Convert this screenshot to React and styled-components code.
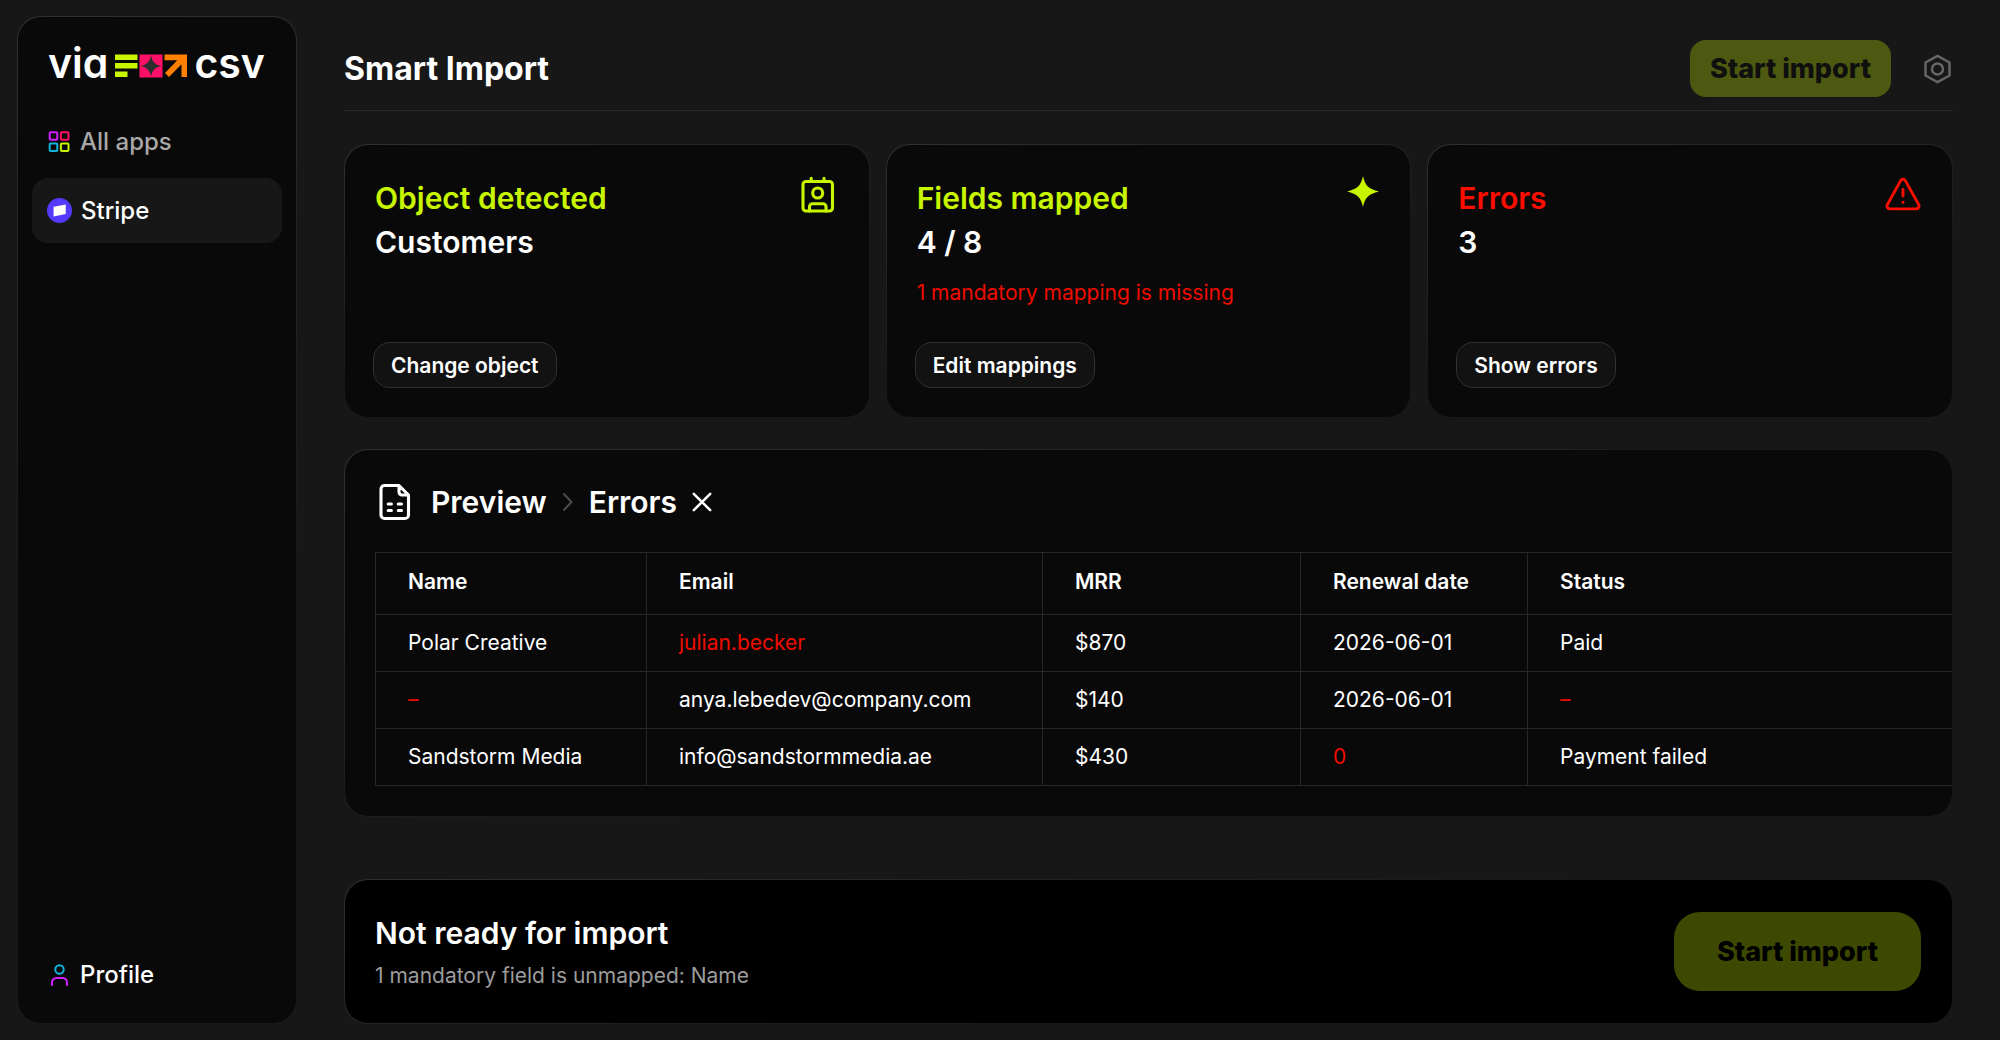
import { useState } from "react";
import styled, { createGlobalStyle } from "styled-components";

const GlobalStyle = createGlobalStyle`
    * {
        box-sizing: border-box;
    }

    body {
        margin: 0;
        background: #171717;
        color: #fff;
        font-family: Inter, "Liberation Sans", sans-serif;
    }

    h1, h2, p {
        margin: 0;
    }

    button {
        font-family: inherit;
        cursor: pointer;
    }
`;

const Page = styled.div`
    min-height: 100vh;
    display: grid;
    grid-template-columns: 280px minmax(0, 1fr);
    column-gap: 47px;
    padding: 16px 47px 16px 17px;
`;

const Surface = styled.section`
    border: 1px solid transparent;
    border-radius: 24px;
    background:
        linear-gradient(${(props) => props.$fill || "#090909"}, ${(props) => props.$fill || "#090909"}) padding-box,
        linear-gradient(165deg, #303030, #171717 60%) border-box;
`;

const Sidebar = styled(Surface)`
    display: flex;
    flex-direction: column;
    padding: 22px 14px 16px;
`;

const Logo = styled.a`
    display: flex;
    align-items: baseline;
    gap: 7px;
    padding: 0 16px;
    margin-bottom: 22px;
    color: #fff;
    font-size: 41px;
    line-height: 48px;
    font-weight: 600;
    font-feature-settings: "cv11";
    text-decoration: none;

    svg {
        margin-bottom: -2px;
    }
`;

const Nav = styled.nav`
    flex: 1;
    display: flex;
    flex-direction: column;
    gap: 4px;
`;

const NavLink = styled.a`
    display: flex;
    align-items: center;
    gap: 9px;
    height: 65px;
    padding: 0 15px;
    border-radius: 16px;
    background: ${(props) => (props.$active ? "#171717" : "transparent")};
    color: ${(props) => (props.$muted ? "#a8a8a8" : "#fff")};
    font-size: 24px;
    font-weight: 500;
    text-decoration: none;

    &:last-child {
        margin-top: auto;
    }
`;

const Main = styled.main`
    display: flex;
    flex-direction: column;
`;

const Header = styled.header`
    display: flex;
    align-items: center;
    height: 95px;
    padding: 24px 2px 13px 0;
    margin-bottom: 33px;
    border-bottom: 1px solid #2b2b2b;
`;

const Title = styled.h1`
    flex: 1;
    font-size: 32px;
    line-height: 40px;
    font-weight: 700;
`;

const StartButton = styled.button`
    height: ${(props) => (props.$large ? "79px" : "57px")};
    padding: 0 ${(props) => (props.$large ? "43px" : "20px")};
    border: 0;
    border-radius: ${(props) => (props.$large ? "26px" : "16px")};
    background: #cbf201;
    color: #000;
    font-size: 27px;
    font-weight: 800;
    opacity: 0.3;
`;

const IconButton = styled.button`
    display: flex;
    padding: 0;
    border: 0;
    background: none;
    color: inherit;
`;

const SettingsButton = styled(IconButton)`
    margin-left: 32px;
    color: #666;
`;

const Cards = styled.div`
    display: grid;
    grid-template-columns: repeat(3, minmax(0, 1fr));
    gap: 16px;
    margin-bottom: 31px;
`;

const Card = styled(Surface)`
    display: flex;
    flex-direction: column;
    align-items: flex-start;
    min-height: 274px;
    padding: 30px 31px 29px 28px;
`;

const CardHead = styled.div`
    align-self: stretch;
    display: flex;
    justify-content: space-between;
`;

const CardTitle = styled.h2`
    padding: 1px 0 0 2px;
    color: ${(props) => props.$color};
    font-size: 30px;
    line-height: 44px;
    font-weight: 600;
`;

const CardValue = styled.p`
    padding-left: 2px;
    font-size: 30px;
    line-height: 44px;
    font-weight: 600;
`;

const CardNote = styled.p`
    margin-top: 15px;
    padding-left: 2px;
    color: #f00c00;
    font-size: 21px;
    line-height: 28px;
`;

const CardButton = styled.button`
    margin-top: auto;
    height: 46px;
    padding: 0 17px;
    border: 1px solid #303030;
    border-radius: 17px;
    background: #121212;
    color: #fff;
    font-size: 21px;
    font-weight: 600;
`;

const Preview = styled(Surface)`
    padding: 32px 0 30px 30px;
    overflow: hidden;
`;

const Crumbs = styled.div`
    display: flex;
    align-items: center;
    height: 40px;
    margin-bottom: 30px;
`;

const Crumb = styled.h2`
    font-size: 30px;
    line-height: 40px;
    font-weight: 600;
    margin: 0 15px 0 16px;
`;

const Table = styled.table`
    width: 100%;
    table-layout: fixed;
    border-collapse: collapse;
    font-size: 21px;
    line-height: 28px;
    text-align: left;
`;

const Column = styled.col`
    width: ${(props) => props.$width};
`;

const HeadCell = styled.th`
    height: 62px;
    padding: 0 32px 4px;
    border: 1px solid #272727;
    border-right: 0;
    font-weight: 600;
`;

const Cell = styled.td`
    height: 57px;
    padding: 0 32px;
    border: 1px solid #272727;
    border-right: 0;
    color: ${(props) => (props.$invalid ? "#f00c00" : "#fff")};
`;

const Footer = styled(Surface)`
    display: flex;
    align-items: center;
    justify-content: space-between;
    height: 145px;
    margin-top: auto;
    padding: 0 31px 0 30px;
`;

const FooterTitle = styled.h2`
    font-size: 30px;
    line-height: 44px;
    font-weight: 600;
`;

const FooterNote = styled.p`
    margin-top: 5px;
    color: #9c9c9c;
    font-size: 21px;
    line-height: 32px;
`;

const LogoMark = () => (
    <svg width="72" height="24" viewBox="0 0 72 24" aria-hidden="true">
        <path fill="#c8f500" d="M0 .5h22.5V6H0zM0 9h22.5v5.500H0zM0 17.500h12.500V23H0z" />
        <path fill="#ff1068" d="M24.500.5h23v23h-23z" />
        <path fill="#2d2d2d" d="M36 1.500c1.500 6.500 4 9 10.500 10.500-6.500 1.500-9 4-10.500 10.500-1.500-6.500-4-9-10.500-10.500C32 10.500 34.500 8 36 1.500z" />
        <path fill="#ff8000" d="M49.500.5H72V23h-5.500V10.200L54 23l-4-4L62.300 6.200H49.500z" />
    </svg>
);

const AppsIcon = () => (
    <svg width="24" height="24" viewBox="0 0 24 24" fill="none" strokeWidth="2">
        <rect x="2.700" y="2.200" width="7.600" height="7.600" rx="1" stroke="#d320ff" />
        <rect x="13.900" y="2.200" width="7.600" height="7.600" rx="1" stroke="#ff1068" />
        <rect x="2.700" y="13.400" width="7.600" height="7.600" rx="1" stroke="#10b4dc" />
        <rect x="13.900" y="13.400" width="7.600" height="7.600" rx="1" stroke="#c8f500" />
    </svg>
);

const StripeIcon = () => (
    <svg width="25" height="25" viewBox="0 0 24 24">
        <circle cx="12" cy="12" r="12" fill="#533afd" />
        <path fill="#fff" d="M6.300 8.500 18 6.200v9.200L6.300 17.800z" />
    </svg>
);

const ProfileIcon = () => (
    <svg width="24" height="24" viewBox="0 0 24 24" fill="none" strokeWidth="2" strokeLinecap="round">
        <circle cx="12.500" cy="6.500" r="4.200" stroke="#10b4dc" />
        <path stroke="#d320ff" d="M5 22v-2.500a4.500 4.500 0 0 1 4.500-4.500h6a4.500 4.500 0 0 1 4.500 4.500V22" />
    </svg>
);

const SettingsIcon = () => (
    <svg width="28" height="32" viewBox="0 0 28 32" fill="none" stroke="currentColor" strokeWidth="2.500" strokeLinejoin="round">
        <path d="M14.500 2.800 26.500 9.500v13l-12 6.700L2.500 22.500v-13z" />
        <circle cx="14.500" cy="16" r="5.500" />
    </svg>
);

const ContactIcon = () => (
    <svg width="40" height="40" viewBox="0 0 40 40" fill="none" stroke="#c8f500" strokeWidth="3.100" strokeLinecap="round">
        <rect x="5" y="6.500" width="29.500" height="29.500" rx="3" />
        <path d="M13.200 3.200v3M26 3.200v3M11.500 36v-4.200a3 3 0 0 1 3-3h10.500a3 3 0 0 1 3 3V36" />
        <circle cx="19.700" cy="18" r="5" />
    </svg>
);

const SparkIcon = () => (
    <svg width="32" height="36" viewBox="2 0 32 36">
        <path fill="#c8f500" d="M18 1c2 9.500 5.500 13 16 15.500-10.500 2.500-14 6-16 15.500-2-9.500-5.500-13-16-15.500C12.500 14 16 10.500 18 1z" />
    </svg>
);

const AlertIcon = () => (
    <svg width="36" height="40" viewBox="0 0 36 40" fill="none" stroke="#fb0d00" strokeWidth="2.900" strokeLinecap="round" strokeLinejoin="round">
        <path d="M15.700 5.600a2.700 2.700 0 0 1 4.600 0l13.300 23.800a3 3 0 0 1-2.600 4.500H5a3 3 0 0 1-2.600-4.500z" />
        <path d="M18 14.500v6.500M18 27.300v.2" />
    </svg>
);

const FileIcon = () => (
    <svg width="40" height="40" viewBox="0 0 40 40" fill="none" stroke="#fff" strokeWidth="3.100" strokeLinecap="round" strokeLinejoin="round">
        <path d="M24 3.500H9.500a3.500 3.500 0 0 0-3.500 3.500v26a3.500 3.500 0 0 0 3.500 3.500h20.500a3.500 3.500 0 0 0 3.500-3.500V13zv6.500a3 3 0 0 0 3 3h6.500" />
        <path d="M13.200 22h3.200M23.300 22h3.200M13.200 28.500h3.200M23.300 28.500h3.200" />
    </svg>
);

const ChevronIcon = () => (
    <svg width="11" height="20" viewBox="0 0 11 20" fill="none" stroke="#4c4c4c" strokeWidth="2">
        <path d="M1.500 1.500 9.500 10l-8 8.500" />
    </svg>
);

const CloseIcon = () => (
    <svg width="20" height="20" viewBox="0 0 20 20" fill="none" stroke="currentColor" strokeWidth="2.500" strokeLinecap="round">
        <path d="m1.800 1.800 16.400 16.400M18.200 1.800 1.800 18.200" />
    </svg>
);

const columns = [
    { label: "Name", width: "271px" },
    { label: "Email", width: "396px" },
    { label: "MRR", width: "258px" },
    { label: "Renewal date", width: "227px" },
    { label: "Status", width: "auto" },
];

const rows = [
    { values: ["Polar Creative", "julian.becker", "$870", "2026-06-01", "Paid"], invalid: [1] },
    { values: ["–", "anya.lebedev@company.com", "$140", "2026-06-01", "–"], invalid: [0, 4] },
    { values: ["Sandstorm Media", "info@sandstormmedia.ae", "$430", "0", "Payment failed"], invalid: [3] },
];

function App() {
    const [showErrors, setShowErrors] = useState(true);
    const invalidCount = rows.filter((row) => row.invalid.length > 0).length;

    return (
        <>
            <GlobalStyle />
            <Page>
                <Sidebar as="aside">
                    <Logo href="#">
                        <span>via</span>
                        <LogoMark />
                        <span>csv</span>
                    </Logo>
                    <Nav>
                        <NavLink href="#apps" $muted>
                            <AppsIcon />
                            All apps
                        </NavLink>
                        <NavLink href="#stripe" $active>
                            <StripeIcon />
                            Stripe
                        </NavLink>
                        <NavLink href="#profile">
                            <ProfileIcon />
                            Profile
                        </NavLink>
                    </Nav>
                </Sidebar>

                <Main>
                    <Header>
                        <Title>Smart Import</Title>
                        <StartButton disabled>Start import</StartButton>
                        <SettingsButton aria-label="Settings">
                            <SettingsIcon />
                        </SettingsButton>
                    </Header>

                    <Cards>
                        <Card>
                            <CardHead>
                                <CardTitle $color="#c8f500">Object detected</CardTitle>
                                <ContactIcon />
                            </CardHead>
                            <CardValue>Customers</CardValue>
                            <CardButton>Change object</CardButton>
                        </Card>
                        <Card>
                            <CardHead>
                                <CardTitle $color="#c8f500">Fields mapped</CardTitle>
                                <SparkIcon />
                            </CardHead>
                            <CardValue>4 / 8</CardValue>
                            <CardNote>1 mandatory mapping is missing</CardNote>
                            <CardButton>Edit mappings</CardButton>
                        </Card>
                        <Card>
                            <CardHead>
                                <CardTitle $color="#fb0d00">Errors</CardTitle>
                                <AlertIcon />
                            </CardHead>
                            <CardValue>{invalidCount}</CardValue>
                            <CardButton onClick={() => setShowErrors(true)}>Show errors</CardButton>
                        </Card>
                    </Cards>

                    <Preview>
                        <Crumbs>
                            <FileIcon />
                            <Crumb>Preview</Crumb>
                            {showErrors && (
                                <>
                                    <ChevronIcon />
                                    <Crumb>Errors</Crumb>
                                    <IconButton aria-label="Close errors" onClick={() => setShowErrors(false)}>
                                        <CloseIcon />
                                    </IconButton>
                                </>
                            )}
                        </Crumbs>
                        <Table>
                            <colgroup>
                                {columns.map((column) => (
                                    <Column key={column.label} $width={column.width} />
                                ))}
                            </colgroup>
                            <thead>
                                <tr>
                                    {columns.map((column) => (
                                        <HeadCell key={column.label} scope="col">
                                            {column.label}
                                        </HeadCell>
                                    ))}
                                </tr>
                            </thead>
                            <tbody>
                                {rows.map((row, index) => (
                                    <tr key={index}>
                                        {row.values.map((value, i) => (
                                            <Cell key={i} $invalid={row.invalid.includes(i)}>
                                                {value}
                                            </Cell>
                                        ))}
                                    </tr>
                                ))}
                            </tbody>
                        </Table>
                    </Preview>

                    <Footer as="footer" $fill="#000">
                        <div>
                            <FooterTitle>Not ready for import</FooterTitle>
                            <FooterNote>1 mandatory field is unmapped: Name</FooterNote>
                        </div>
                        <StartButton $large disabled>
                            Start import
                        </StartButton>
                    </Footer>
                </Main>
            </Page>
        </>
    );
}

export default App;
